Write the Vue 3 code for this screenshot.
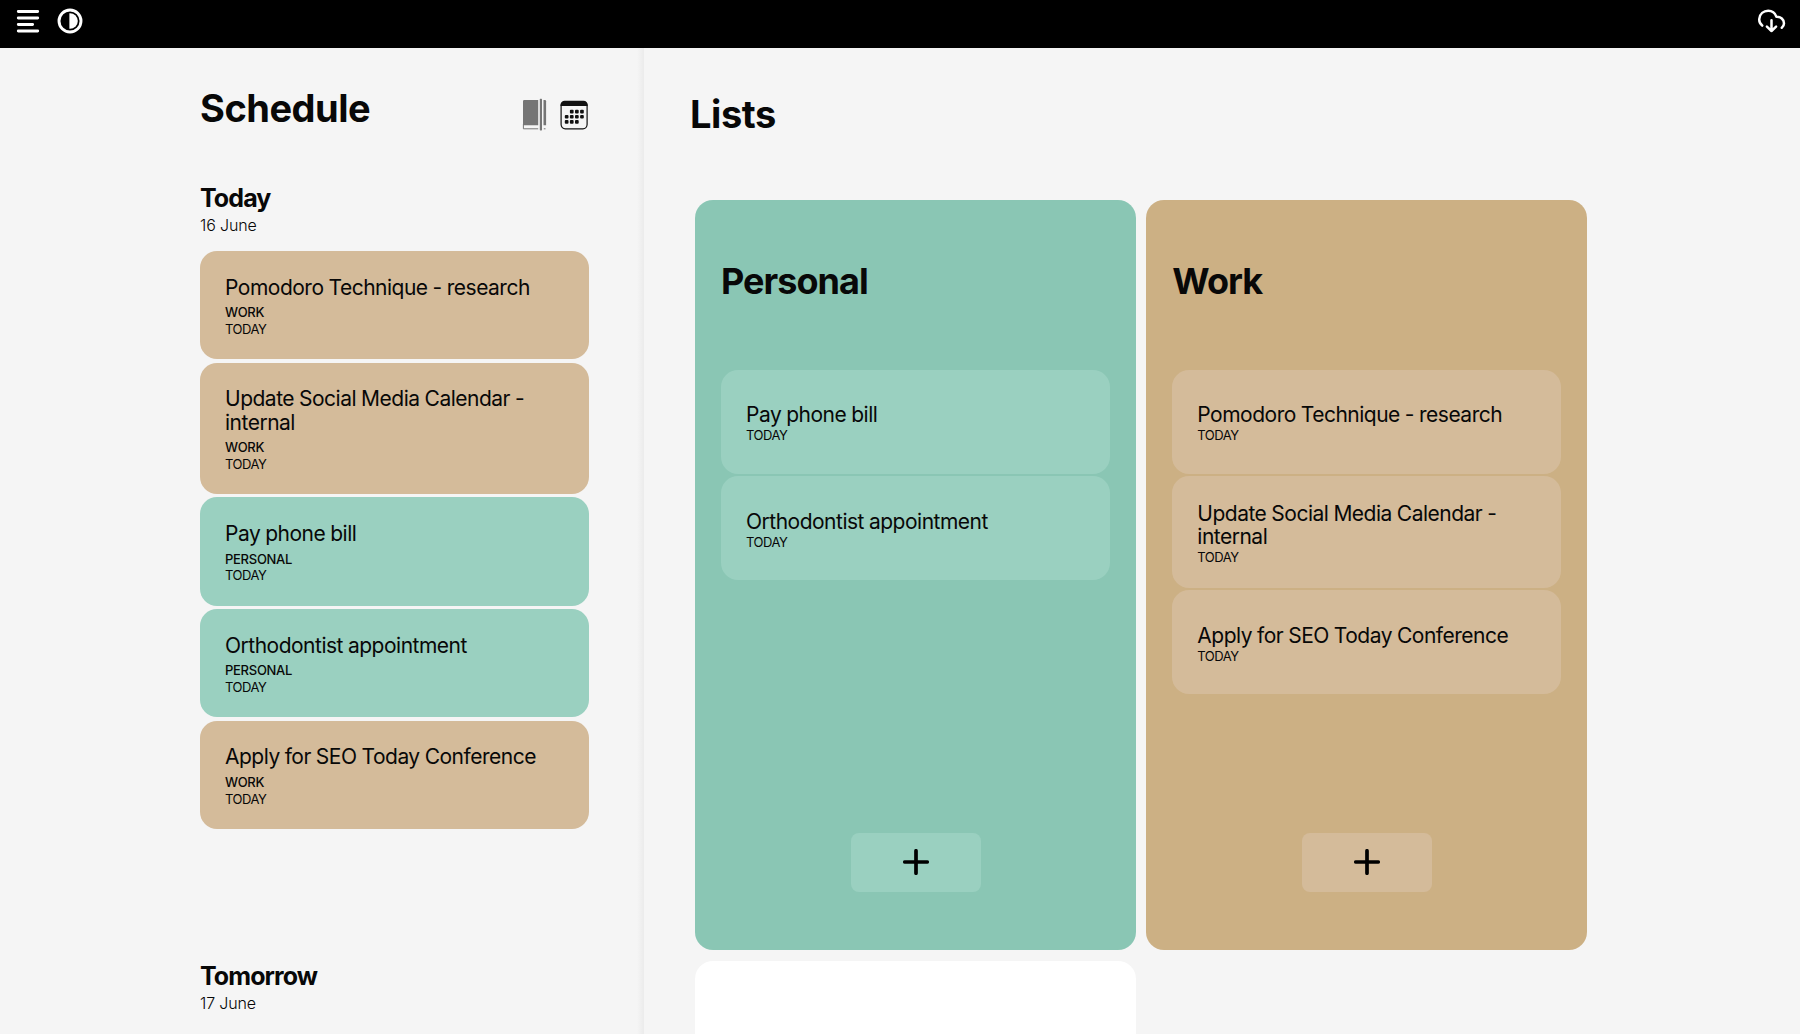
<script setup>
const schedule = [
  { title: 'Pomodoro Technique - research', list: 'Work', due: 'Today' },
  { title: 'Update Social Media Calendar - internal', list: 'Work', due: 'Today' },
  { title: 'Pay phone bill', list: 'Personal', due: 'Today' },
  { title: 'Orthodontist appointment', list: 'Personal', due: 'Today' },
  { title: 'Apply for SEO Today Conference', list: 'Work', due: 'Today' },
]

const lists = ['Personal', 'Work'].map((name) => ({
  name,
  tasks: schedule.filter((task) => task.list === name),
}))
</script>

<template>
  <div class="app">
    <header class="topbar">
      <svg class="menu" width="24" height="24" viewBox="0 0 24 24">
        <path d="M2.3 2.5H21.7M2.3 9H21.7M2.3 15.5H16.6M2.3 22H21.7" fill="none" stroke="#fff" stroke-width="2.9" stroke-linecap="round" />
      </svg>
      <svg class="contrast" width="26" height="26" viewBox="0 0 26 26">
        <circle cx="13" cy="13" r="11" fill="none" stroke="#fff" stroke-width="2.9" />
        <path d="M12.4 5.2H13A7.8 7.8 0 0 1 13 20.8H12.4Z" fill="#fff" />
      </svg>
      <svg class="cloud" width="30" height="26" viewBox="0 0 30 26">
        <g fill="none" stroke="#fff" stroke-width="2.5" stroke-linecap="round" stroke-linejoin="round">
          <path d="M5.2 17.6C2.9 15.8 2 13.5 2.3 10.8C2.8 6 6.6 2.9 11.2 2.8C15.2 2.8 18 5 19.4 8.7C23.7 8.5 27 11.5 27 15.2C27 17 26.3 18.6 24.8 19.7" />
          <path d="M14.5 12.2V23M9.9 18.7L14.5 23L19.1 18.7" />
        </g>
      </svg>
    </header>

    <main class="content">
      <section class="sidebar">
        <div class="sidebar-head">
          <h1>Schedule</h1>
          <div class="views">
            <svg width="25" height="33" viewBox="0 0 25 33">
              <path d="M2.2 2H16.2V27.2H1V3.2A1.2 1.2 0 0 1 2.2 2Z" fill="#757575" />
              <path d="M1.4 26V30.8H16.2M21.8 30.8H23.5" fill="none" stroke="#757575" stroke-width="1" />
              <rect x="17.8" y=".8" width="2.2" height="31.6" rx=".6" fill="#757575" />
              <path d="M21.5 2H22.9A1.2 1.2 0 0 1 24.1 3.2V27.2H21.5Z" fill="#757575" />
            </svg>
            <svg width="28" height="30" viewBox="0 0 28 30">
              <rect x="1.1" y="1.6" width="26" height="27.2" rx="4.2" fill="none" stroke="#111" stroke-width="1.2" />
              <path d="M.5 6V5A4.2 4.2 0 0 1 4.7.8H23.5A4.2 4.2 0 0 1 27.7 5V6Z" fill="#111" />
              <g fill="#111">
                <rect x="9.9" y="9.8" width="3.7" height="3.7" rx="1" /><rect x="15" y="9.8" width="3.7" height="3.7" rx="1" /><rect x="20.1" y="9.8" width="3.7" height="3.7" rx="1" />
                <rect x="4.8" y="14.9" width="3.7" height="3.7" rx="1" /><rect x="9.9" y="14.9" width="3.7" height="3.7" rx="1" /><rect x="15" y="14.9" width="3.7" height="3.7" rx="1" /><rect x="20.1" y="14.9" width="3.7" height="3.7" rx="1" />
                <rect x="4.8" y="20" width="3.7" height="3.7" rx="1" /><rect x="9.9" y="20" width="3.7" height="3.7" rx="1" /><rect x="15" y="20" width="3.7" height="3.7" rx="1" />
              </g>
            </svg>
          </div>
        </div>

        <div class="day">
          <h2>Today</h2>
          <p class="date">16 June</p>
          <div class="stack">
            <article v-for="task in schedule" :key="task.title" class="card" :class="task.list.toLowerCase()">
              <h3>{{ task.title }}</h3>
              <p class="tag">{{ task.list }}</p>
              <p class="due">{{ task.due }}</p>
            </article>
          </div>
        </div>

        <div class="day">
          <h2>Tomorrow</h2>
          <p class="date">17 June</p>
        </div>
      </section>

      <section class="board">
        <h1>Lists</h1>
        <div class="grid">
          <div v-for="list in lists" :key="list.name" class="panel" :class="list.name.toLowerCase() + '-panel'">
            <h2>{{ list.name }}</h2>
            <div class="stack">
              <article v-for="task in list.tasks" :key="task.title" class="card compact" :class="list.name.toLowerCase()">
                <h3>{{ task.title }}</h3>
                <p class="due">{{ task.due }}</p>
              </article>
            </div>
            <button class="add" :class="list.name.toLowerCase()" aria-label="Add task">
              <svg width="26" height="26" viewBox="0 0 26 26">
                <path d="M13 1.8V24.2M1.8 13H24.2" stroke="#000" stroke-width="3.7" stroke-linecap="round" />
              </svg>
            </button>
          </div>
          <div class="panel blank"></div>
        </div>
      </section>
    </main>
  </div>
</template>

<style>
html,
body {
  margin: 0;
  overflow: hidden;
}
</style>

<style scoped>
.app {
  height: 1034px;
  display: flex;
  flex-direction: column;
  overflow: hidden;
  background: #f5f5f5;
  color: #080808;
  font-family: Inter, 'Liberation Sans', sans-serif;
}

h1,
h2,
h3,
p {
  margin: 0;
}

svg {
  display: block;
  flex: none;
}

.topbar {
  flex: none;
  height: 47.5px;
  box-sizing: border-box;
  display: flex;
  align-items: flex-start;
  padding: 8px 13px 0 16px;
  background: #000;
}

.menu {
  margin-top: 1px;
}

.contrast {
  margin-left: 16.5px;
}

.cloud {
  margin-left: auto;
}

.content {
  flex: 1;
  min-height: 0;
  display: flex;
}

.sidebar {
  flex: none;
  width: 643.5px;
  box-sizing: border-box;
  padding: 0 54.5px 0 200px;
  background: linear-gradient(to left, #ebebeb, #f5f5f5 7px);
}

.sidebar-head {
  display: flex;
  justify-content: space-between;
  height: 135px;
}

h1 {
  font-size: 38px;
  line-height: 46px;
  font-weight: 700;
  letter-spacing: -0.4px;
}

.sidebar h1 {
  padding-top: 37.5px;
  letter-spacing: -0.5px;
}

.views {
  display: flex;
  gap: 12.7px;
  padding: 50px 1.3px 0 0;
}

.views svg + svg {
  margin-top: 2.5px;
}

.day h2 {
  font-size: 25px;
  line-height: 30px;
  font-weight: 700;
  letter-spacing: -0.9px;
}

.date {
  padding-top: 2px;
  font-size: 16px;
  line-height: 20px;
  font-weight: 300;
  letter-spacing: -0.15px;
}

.date + .stack {
  margin-top: 16.5px;
}

.day + .day {
  margin-top: 132px;
}

.stack {
  display: flex;
  flex-direction: column;
  gap: 3.3px;
}

.card {
  box-sizing: border-box;
  padding: 24.8px 36px 21.6px 25px;
  border-radius: 17px;
}

.card h3 {
  font-size: 21px;
  line-height: 23.3px;
  font-weight: 400;
  letter-spacing: -0.5px;
  word-spacing: -0.4px;
}

.personal {
  background: #9ad0c0;
}

.work {
  background: #d4bb9a;
}

.tag,
.due {
  font-size: 13px;
  line-height: 16.8px;
  text-transform: uppercase;
}

.tag {
  margin-top: 5px;
  font-weight: 500;
  letter-spacing: -0.28px;
}

.due {
  letter-spacing: -0.5px;
}

.board {
  flex: 1;
  padding: 43.5px 0 0 46.5px;
}

.grid {
  display: grid;
  grid-template-columns: 441px 441px;
  grid-auto-rows: 750px;
  gap: 11px 10.3px;
  padding: 63px 0 0 5px;
}

.panel {
  box-sizing: border-box;
  display: flex;
  flex-direction: column;
  padding: 60px 26px 58.5px;
  border-radius: 18px;
}

.personal-panel {
  background: #8ac6b4;
}

.work-panel {
  background: #ccb084;
}

.blank {
  background: #fff;
}

.panel h2 {
  height: 110px;
  font-size: 36px;
  line-height: 43px;
  font-weight: 700;
  letter-spacing: -0.95px;
}

.compact {
  min-height: 103.5px;
  display: flex;
  flex-direction: column;
  justify-content: center;
}

.compact h3 {
  padding-top: 0.7px;
}

.compact .due {
  margin-top: 0.9px;
}

.panel .stack {
  gap: 2.8px;
}

.add {
  width: 130px;
  height: 59px;
  margin: auto auto 0;
  padding: 0;
  display: flex;
  align-items: center;
  justify-content: center;
  border: 0;
  border-radius: 8px;
}
</style>
